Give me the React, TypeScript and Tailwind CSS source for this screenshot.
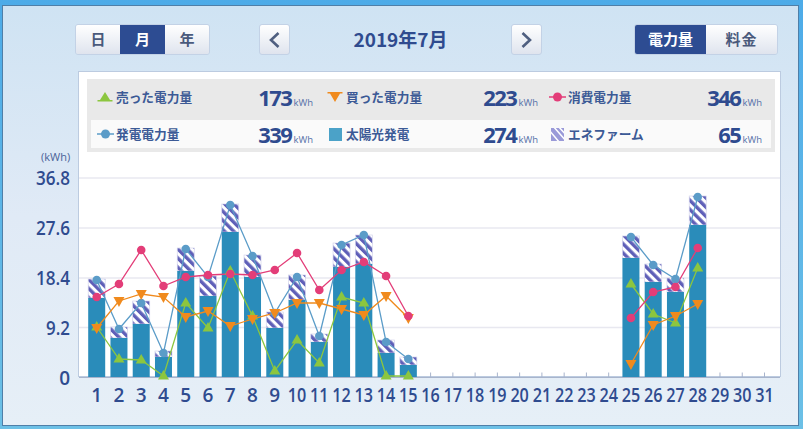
const days = [
  { d: 1, top: 279, solar: 298, blue: 280, pink: 297, orange: 328, green: 327 },
  { d: 2, top: 327, solar: 338, blue: 329, pink: 284, orange: 301, green: 359 },
  { d: 3, top: 301, solar: 324, blue: 303, pink: 250, orange: 294, green: 360 },
  { d: 4, top: 351, solar: 357, blue: 353, pink: 286, orange: 297, green: 376 },
  { d: 5, top: 248, solar: 271, blue: 249, pink: 277, orange: 317, green: 303 },
  { d: 6, top: 276, solar: 296, blue: 277, pink: 275, orange: 311, green: 328 },
  { d: 7, top: 204, solar: 232, blue: 205, pink: 274, orange: 326, green: 271 },
  { d: 8, top: 255, solar: 277, blue: 256, pink: 275, orange: 319, green: 316 },
  { d: 9, top: 312, solar: 328, blue: 313, pink: 270, orange: 313, green: 371 },
  { d: 10, top: 275, solar: 300, blue: 277, pink: 253, orange: 303, green: 340 },
  { d: 11, top: 334, solar: 342, blue: 336, pink: 290, orange: 303, green: 363 },
  { d: 12, top: 243, solar: 267, blue: 245, pink: 270, orange: 309, green: 297 },
  { d: 13, top: 235, solar: 264, blue: 235, pink: 262, orange: 315, green: 303 },
  { d: 14, top: 340, solar: 353, blue: 342, pink: 276, orange: 296, green: 376 },
  { d: 15, top: 357, solar: 365, blue: 359, pink: 316, orange: 318, green: 376 },
  { d: 25, top: 236, solar: 258, blue: 237, pink: 318, orange: 364, green: 284 },
  { d: 26, top: 264, solar: 282, blue: 265, pink: 292, orange: 325, green: 314 },
  { d: 27, top: 278, solar: 292, blue: 279, pink: 287, orange: 316, green: 323 },
  { d: 28, top: 196, solar: 225, blue: 197, pink: 248, orange: 304, green: 268 },
]

const BASE = 377
const dayX = (d: number) => 96.7 + (d - 1) * 22.26
const PINK = "#e33d78"
const BLUE = "#5b9cc8"
const ORANGE = "#f08a1d"
const GREEN = "#8cc63f"

// only consecutive days get joined, 15 -> 25 has a gap
function segments(key: "blue" | "pink" | "orange" | "green") {
  const groups = [days.slice(0, 15), days.slice(15)]
  return groups.map((g) => g.map((p) => `${dayX(p.d)},${p[key]}`).join(" "))
}

function Series({ k, color }: { k: "blue" | "pink" | "orange" | "green"; color: string }) {
  return (
    <>
      {segments(k).map((pts) => (
        <polyline key={pts} points={pts} fill="none" stroke={color} strokeWidth="1.3" />
      ))}
    </>
  )
}

function Chart() {
  return (
    <svg width="803" height="281" viewBox="0 148 803 281" className="block -ml-[87px] -mt-[4px] max-w-none">
      <defs>
        <pattern id="fuelcell" width="6.5" height="6.5" patternUnits="userSpaceOnUse" patternTransform="rotate(-45)">
          <rect width="6.5" height="6.5" fill="#ffffff" />
          <rect width="3.4" height="6.5" fill="#5f5fb8" />
        </pattern>
      </defs>

      {[178, 228, 278, 327.5].map((y) => (
        <line key={y} x1="79" x2="780" y1={y} y2={y} stroke="#e8e8f0" strokeWidth="1.5" />
      ))}
      {Array.from({ length: 31 }, (_, i) => i + 1).map((d) => (
        <line key={d} x1={dayX(d)} x2={dayX(d)} y1="372.500" y2="377" stroke="#a8b4cc" />
      ))}
      <line x1="79" x2="780" y1="377.5" y2="377.5" stroke="#a8b4cc" />

      {days.map((p) => (
        <g key={p.d}>
          <rect x={dayX(p.d) - 8.5} y={p.top} width="17" height={p.solar - p.top} fill="url(#fuelcell)" stroke="#d4d4ec" strokeWidth="0.7" />
          <rect x={dayX(p.d) - 8.5} y={p.solar} width="17" height={BASE - p.solar} fill="#2a8cba" />
        </g>
      ))}

      <Series k="blue" color={BLUE} />
      <Series k="green" color={GREEN} />
      <Series k="orange" color={ORANGE} />
      <Series k="pink" color={PINK} />

      {days.map((p) => (
        <circle key={p.d} cx={dayX(p.d)} cy={p.blue} r="4.3" fill={BLUE} />
      ))}
      {days.map((p) => {
        const x = dayX(p.d)
        return <polygon key={p.d} points={`${x},${p.green - 6} ${x + 5.5},${p.green + 3.5} ${x - 5.5},${p.green + 3.5}`} fill={GREEN} />
      })}
      {days.map((p) => {
        const x = dayX(p.d)
        return <polygon key={p.d} points={`${x - 5.5},${p.orange - 4} ${x + 5.5},${p.orange - 4} ${x},${p.orange + 6}`} fill={ORANGE} />
      })}
      {days.map((p) => (
        <circle key={p.d} cx={dayX(p.d)} cy={p.pink} r="4.3" fill={PINK} />
      ))}

      <text x="41" y="161" fontSize="11" fill="#4a6298" fontFamily="'Open Sans', sans-serif">
        (kWh)
      </text>
      <g fill="#2f4b8f" fontFamily="'Open Sans', sans-serif" fontSize="19" fontWeight="600">
        {[
          ["36.8", 178],
          ["27.6", 228],
          ["18.4", 278],
          ["9.2", 328],
          ["0", 378],
        ].map(([t, y]) => (
          <text key={t} x="70" y={Number(y) + 7} textAnchor="end" textLength={t === "0" ? undefined : t === "9.2" ? 24 : 34} lengthAdjust="spacingAndGlyphs">
            {t}
          </text>
        ))}
        {Array.from({ length: 31 }, (_, i) => i + 1).map((d) => (
          <text key={d} x={dayX(d)} y="402" textAnchor="middle" textLength={d < 10 ? undefined : 18.5} lengthAdjust="spacingAndGlyphs">
            {d}
          </text>
        ))}
      </g>
    </svg>
  )
}

function LegendItem({ icon, label, value, className }: { icon: React.ReactNode; label: string; value: string; className: string }) {
  return (
    <div className={`flex items-center h-7 ${className}`}>
      <div className="w-[18px] shrink-0 flex justify-center">{icon}</div>
      <span className="ml-[2px] text-[12.7px] font-bold text-[#3c5a96] whitespace-nowrap">{label}</span>
      <div className="ml-auto flex items-baseline justify-end">
        <span className="text-[22px] font-bold text-[#2f4b8f] tracking-[-1.5px] font-['Open_Sans',sans-serif]">{value}</span>
        <span className="ml-[2px] text-[9.5px] text-[#5570a8] font-['Open_Sans',sans-serif]">kWh</span>
      </div>
    </div>
  )
}

const triUp = (
  <svg width="16" height="11" viewBox="0 0 16 11">
    <path d="M8 0L13 8H15.500V9.500H0.500V8H3Z" fill={GREEN} />
  </svg>
)
const triDown = (
  <svg width="16" height="11" viewBox="0 0 16 11">
    <path d="M0.500 0H15.500V1.500H13L8 10L3 1.500H0.500Z" fill={ORANGE} />
  </svg>
)
const dot = (c: string) => (
  <svg width="17" height="10" viewBox="0 0 17 10">
    <line x1="0" x2="17" y1="5" y2="5" stroke={c} strokeWidth="1.5" />
    <circle cx="8.500" cy="5" r="4.500" fill={c} />
  </svg>
)

function Btn({ label, active, className }: { label: string; active?: boolean; className: string }) {
  return (
    <div
      className={`flex items-center justify-center h-[29px] text-[15px] font-bold ${className} ${
        active ? "bg-[#2d4c92] text-white" : "bg-gradient-to-b from-white to-[#dfe4ee] text-[#4a5a7c]"
      }`}
    >
      {label}
    </div>
  )
}

function Arrow({ dir }: { dir: "l" | "r" }) {
  return (
    <div className="w-[31px] h-[31px] rounded-[3px] border border-[#c3d2e6] bg-gradient-to-b from-white to-[#dfe4ee] flex items-center justify-center">
      <svg width="13" height="18" viewBox="0 0 13 18">
        <path d={dir === "l" ? "M10.500 2L3 9L10.500 16" : "M2.500 2L10 9L2.500 16"} fill="none" stroke="#4f5f80" strokeWidth="2.600" />
      </svg>
    </div>
  )
}

export default function App() {
  return (
    <div className="w-[803px] h-[429px] overflow-hidden bg-gradient-to-b from-[#4dabe8] to-[#6cc0e6] pt-[5px] font-['Noto_Sans_CJK_JP',sans-serif]">
      <div className="ml-[2px] w-[797px] h-[421px] border border-[#4f7fa8] bg-gradient-to-b from-[#cfe3f3] via-[#e0eaf6] to-[#e6eff7]">
        {/* top buttons */}
        <div className="flex items-start pt-[18px] pl-[72px] h-[65px]">
          <div className="flex rounded-[3px] border border-[#c3d2e6] overflow-hidden w-[135px]">
            <Btn label="日" className="w-[44px]" />
            <Btn label="月" active className="w-[45px]" />
            <Btn label="年" className="w-[44px]" />
          </div>
          <div className="ml-[49px]">
            <Arrow dir="l" />
          </div>
          <div className="w-[221px] h-[31px] leading-[30px] text-center text-[19px] font-bold text-[#2f4b8f]">2019年7月</div>
          <Arrow dir="r" />
          <div className="ml-[92px] flex rounded-[3px] border border-[#c3d2e6] overflow-hidden w-[144px]">
            <Btn label="電力量" active className="w-[71px]" />
            <Btn label="料金" className="w-[71px] tracking-[1px]" />
          </div>
        </div>

        {/* chart panel */}
        <div className="ml-[75px] w-[703px] h-[306px] border border-[#bccbe0] bg-white pt-[7px] pl-[8px]">
          <div className="w-[688px] h-[73px] bg-[#e9e9e9] px-[4px]">
            <div className="flex h-[41px] pb-[5px] items-center pl-[5px]">
              <LegendItem icon={triUp} label="売った電力量" value="173" className="w-[217px]" />
              <LegendItem icon={triDown} label="買った電力量" value="223" className="w-[212px] ml-[13px]" />
              <LegendItem icon={dot(PINK)} label="消費電力量" value="346" className="w-[214px] ml-[10px]" />
            </div>
            <div className="flex h-[28px] items-center bg-[#fafafa] pl-[5px]">
              <LegendItem icon={dot(BLUE)} label="発電電力量" value="339" className="w-[217px]" />
              <LegendItem
                icon={
                  <svg width="13" height="13" viewBox="0 0 13 13">
                    <rect width="13" height="13" fill="#4ba2c8" />
                  </svg>
                }
                label="太陽光発電"
                value="274"
                className="w-[212px] ml-[13px]"
              />
              <LegendItem
                icon={
                  <svg width="13" height="13" viewBox="0 0 13 13">
                    <rect width="13" height="13" fill="#9a9ad8" />
                    <path d="M-2 2L9 15M2 -2L15 13M7 -2L16 8" stroke="#fff" strokeWidth="1.500" />
                  </svg>
                }
                label="エネファーム"
                value="65"
                className="w-[214px] ml-[10px]"
              />
            </div>
          </div>
          <Chart />
        </div>
      </div>
    </div>
  )
}
